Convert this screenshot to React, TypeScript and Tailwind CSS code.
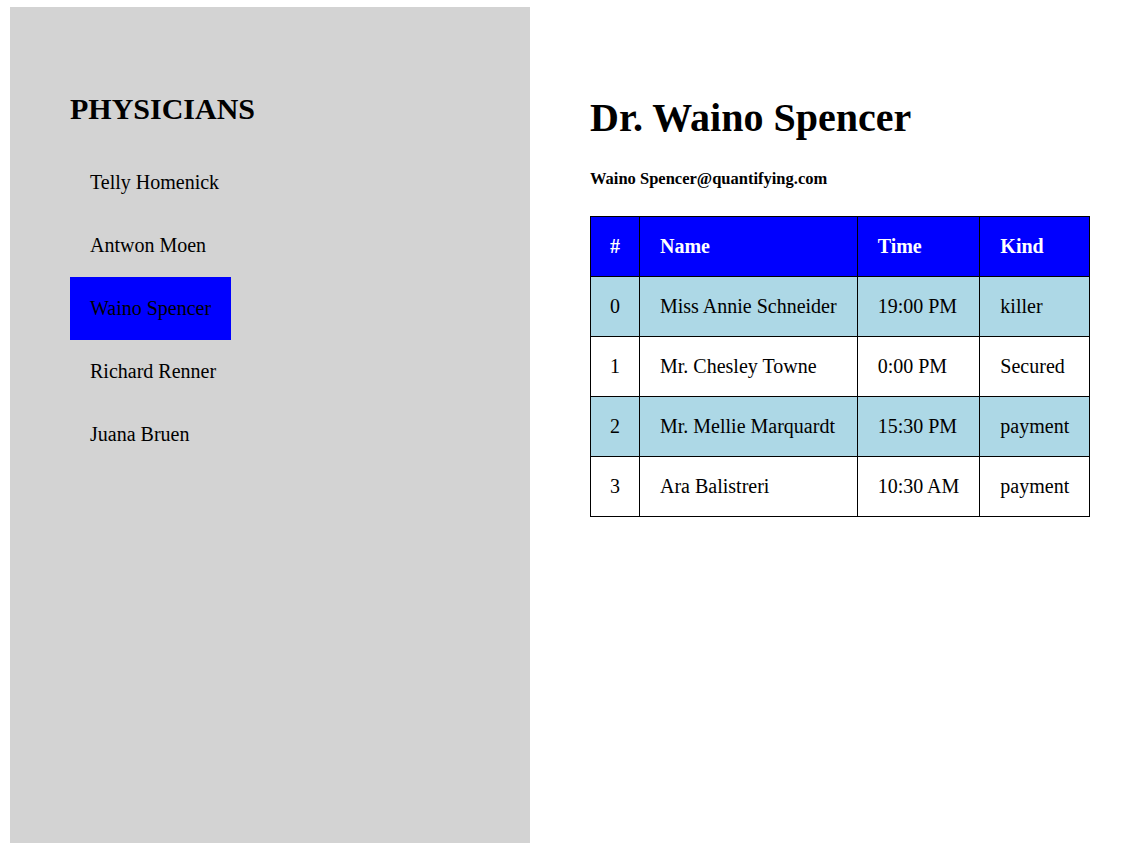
const physicians = ['Telly Homenick', 'Antwon Moen', 'Waino Spencer', 'Richard Renner', 'Juana Bruen'];

const appointments = [
  { name: 'Miss Annie Schneider', time: '19:00 PM', kind: 'killer' },
  { name: 'Mr. Chesley Towne', time: '0:00 PM', kind: 'Secured' },
  { name: 'Mr. Mellie Marquardt', time: '15:30 PM', kind: 'payment' },
  { name: 'Ara Balistreri', time: '10:30 AM', kind: 'payment' },
];

export default function App() {
  const selected = 'Waino Spencer';

  return (
    <div className="flex pl-[10px] pt-[7px] font-['Liberation_Serif',serif] text-black">
      {/* Sidebar */}
      <aside className="h-[836px] w-[520px] shrink-0 bg-[#d3d3d3] px-[60px] pt-[85px]">
        <h2 className="text-[30px] font-bold leading-[34.5px]">PHYSICIANS</h2>
        <ul className="mt-[24px] flex flex-col items-start">
          {physicians.map((p) => (
            <li
              key={p}
              className={`cursor-pointer px-[20px] py-[20px] text-[20px] leading-[23px] ${
                p === selected ? 'bg-[#0000ff]' : ''
              }`}
            >
              {p}
            </li>
          ))}
        </ul>
      </aside>

      {/* Detail */}
      <main className="pl-[60px] pt-[88px]">
        <h1 className="text-[40px] font-bold leading-[46px]">Dr. {selected}</h1>
        <p className="mt-[28px] text-[16.5px] font-bold leading-[19px]">{selected}@quantifying.com</p>
        <table className="mt-[28px] border-collapse border border-black text-[20px] leading-[23px]">
          <thead>
            <tr className="bg-[#0000ff] text-white">
              <th className="border border-black px-[19px] py-[18px] text-center font-bold">#</th>
              <th className="border border-black px-[20px] py-[18px] text-left font-bold">Name</th>
              <th className="border border-black px-[20px] py-[18px] text-left font-bold">Time</th>
              <th className="border border-black px-[20px] py-[18px] text-left font-bold">Kind</th>
            </tr>
          </thead>
          <tbody>
            {appointments.map((a, i) => (
              <tr key={i} className={i % 2 === 0 ? 'bg-[#add8e6]' : 'bg-white'}>
                <td className="border border-black px-[19px] py-[18px] text-center">{i}</td>
                <td className="border border-black px-[20px] py-[18px]">{a.name}</td>
                <td className="border border-black px-[20px] py-[18px]">{a.time}</td>
                <td className="border border-black px-[20px] py-[18px]">{a.kind}</td>
              </tr>
            ))}
          </tbody>
        </table>
      </main>
    </div>
  );
}
